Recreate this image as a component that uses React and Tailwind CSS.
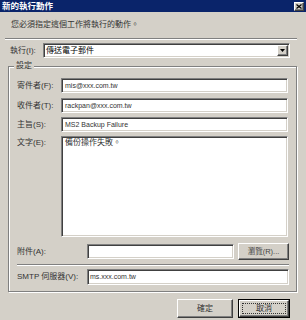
import React from "react";

const font = { fontFamily: '"Liberation Sans", "Noto Sans CJK TC", sans-serif' };

const sunken =
  "bg-white border border-t-[#808080] border-l-[#808080] border-b-white border-r-white shadow-[inset_1px_1px_0_#404040,inset_-1px_-1px_0_#d4d0c8]";
const raised =
  "bg-[#d4d0c8] border border-t-white border-l-white border-b-[#404040] border-r-[#404040] shadow-[inset_-1px_-1px_0_#808080]";
const etch = "h-0 border-t border-t-[#808080] border-b border-b-white";

function Field({ label, value, latin = true, h = "h-[15px]" }) {
  return (
    <div className={`flex items-center ${h}`}>
      <div className="w-[44px] text-[8px] leading-[10px] text-[#333] whitespace-nowrap">{label}</div>
      <div className={`w-[227px] ${h} ${sunken} flex items-center pl-[3px]`}>
        <span className={`${latin ? "text-[7px]" : "text-[8px]"} leading-[10px] text-[#333] whitespace-nowrap`}>{value}</span>
      </div>
    </div>
  );
}

export default function App() {
  return (
    <div className="w-[306px] h-[320px] bg-[#d4d0c8] flex flex-col overflow-hidden" style={font}>
      {/* Title bar */}
      <div className="h-[12px] bg-[#0a246a] flex items-center justify-between pl-[2px] pr-[2px] shrink-0">
        <span className="text-white font-bold text-[8.5px] leading-[12px] whitespace-nowrap">新的執行動作</span>
        <div className={`w-[10px] h-[9px] ${raised} flex items-center justify-center`}>
          <svg width="6" height="5" viewBox="0 0 6 5">
            <path d="M0.5 0.5 L5.5 4.5 M5.5 0.5 L0.5 4.5" stroke="#000" strokeWidth="1.2" />
          </svg>
        </div>
      </div>

      {/* Instruction */}
      <div className="mt-[8px] pl-[11px] h-[10px] text-[8px] leading-[10px] text-[#333] whitespace-nowrap">
        您必須指定這個工作將執行的動作。
      </div>

      <div className={`mt-[8px] ml-[5px] w-[292px] ${etch}`} />

      {/* Execute row */}
      <div className="mt-[3px] pl-[10px] flex items-center h-[15px]">
        <div className="w-[33px] text-[8px] leading-[10px] text-[#333] whitespace-nowrap">執行(I):</div>
        <div className={`w-[247px] h-[15px] ${sunken} flex items-center justify-between pl-[2px] pr-[1px]`}>
          <span className="text-[8px] leading-[10px] text-black whitespace-nowrap">傳送電子郵件</span>
          <div className={`w-[11px] h-[11px] ${raised} flex items-center justify-center`}>
            <svg width="5" height="3" viewBox="0 0 5 3">
              <path d="M0 0 H5 L2.5 3 Z" fill="#000" />
            </svg>
          </div>
        </div>
      </div>

      {/* Group box */}
      <div className="mt-[8px] ml-[8px] w-[289px] relative border border-[#808080] shadow-[1px_1px_0_#fff,inset_1px_1px_0_#fff] pt-[11px] pl-[8px] pb-[6px]">
        <div className="absolute top-[-6px] left-[5px] px-[2px] bg-[#d4d0c8] text-[8px] leading-[10px] text-[#333]">設定</div>

        <Field label="寄件者(F):" value="mis@xxx.com.tw" />
        <div className="mt-[5px]">
          <Field label="收件者(T):" value="rackpan@xxx.com.tw" />
        </div>
        <div className="mt-[4px]">
          <Field label="主旨(S):" value="MS2 Backup Failure" />
        </div>
        <div className="mt-[4px] flex">
          <div className="w-[44px] pt-[2px] text-[8px] leading-[10px] text-[#333]">文字(E):</div>
          <div className={`w-[227px] h-[101px] ${sunken} pl-[3px] pt-[1px] text-[8px] leading-[10px] text-[#333]`}>
            備份操作失敗。
          </div>
        </div>

        <div className="mt-[6px] flex items-center h-[17px]">
          <div className="w-[70px] text-[8px] leading-[10px] text-[#333] whitespace-nowrap">附件(A):</div>
          <div className={`w-[147px] h-[15px] ${sunken}`} />
          <div className={`ml-[4px] w-[51px] h-[17px] ${raised} flex items-center justify-center`}>
            <span className="text-[7.5px] leading-[10px] text-[#444] whitespace-nowrap">瀏覽(R)...</span>
          </div>
        </div>

        <div className={`mt-[4px] w-[272px] ${etch}`} />

        <div className="mt-[3px] flex items-center h-[16px]">
          <div className="w-[70px] text-[8px] leading-[10px] text-[#333] whitespace-nowrap">SMTP 伺服器(V):</div>
          <div className={`w-[202px] h-[16px] ${sunken} flex items-center pl-[2px]`}>
            <span className="text-[7px] leading-[10px] text-[#333] whitespace-nowrap">ms.xxx.com.tw</span>
          </div>
        </div>
      </div>

      {/* Buttons */}
      <div className="mt-[7px] flex justify-end pr-[16px] gap-[5px]">
        <div className={`w-[56px] h-[19px] ${raised} flex items-center justify-center`}>
          <span className="text-[8px] leading-[10px] text-[#333]">確定</span>
        </div>
        <div className="w-[52px] h-[19px] border border-black">
          <div className={`w-full h-full ${raised} p-[2px]`}>
            <div className="w-full h-full border border-dotted border-[#333] flex items-center justify-center">
              <span className="text-[8px] leading-[10px] text-[#333]">取消</span>
            </div>
          </div>
        </div>
      </div>
    </div>
  );
}
